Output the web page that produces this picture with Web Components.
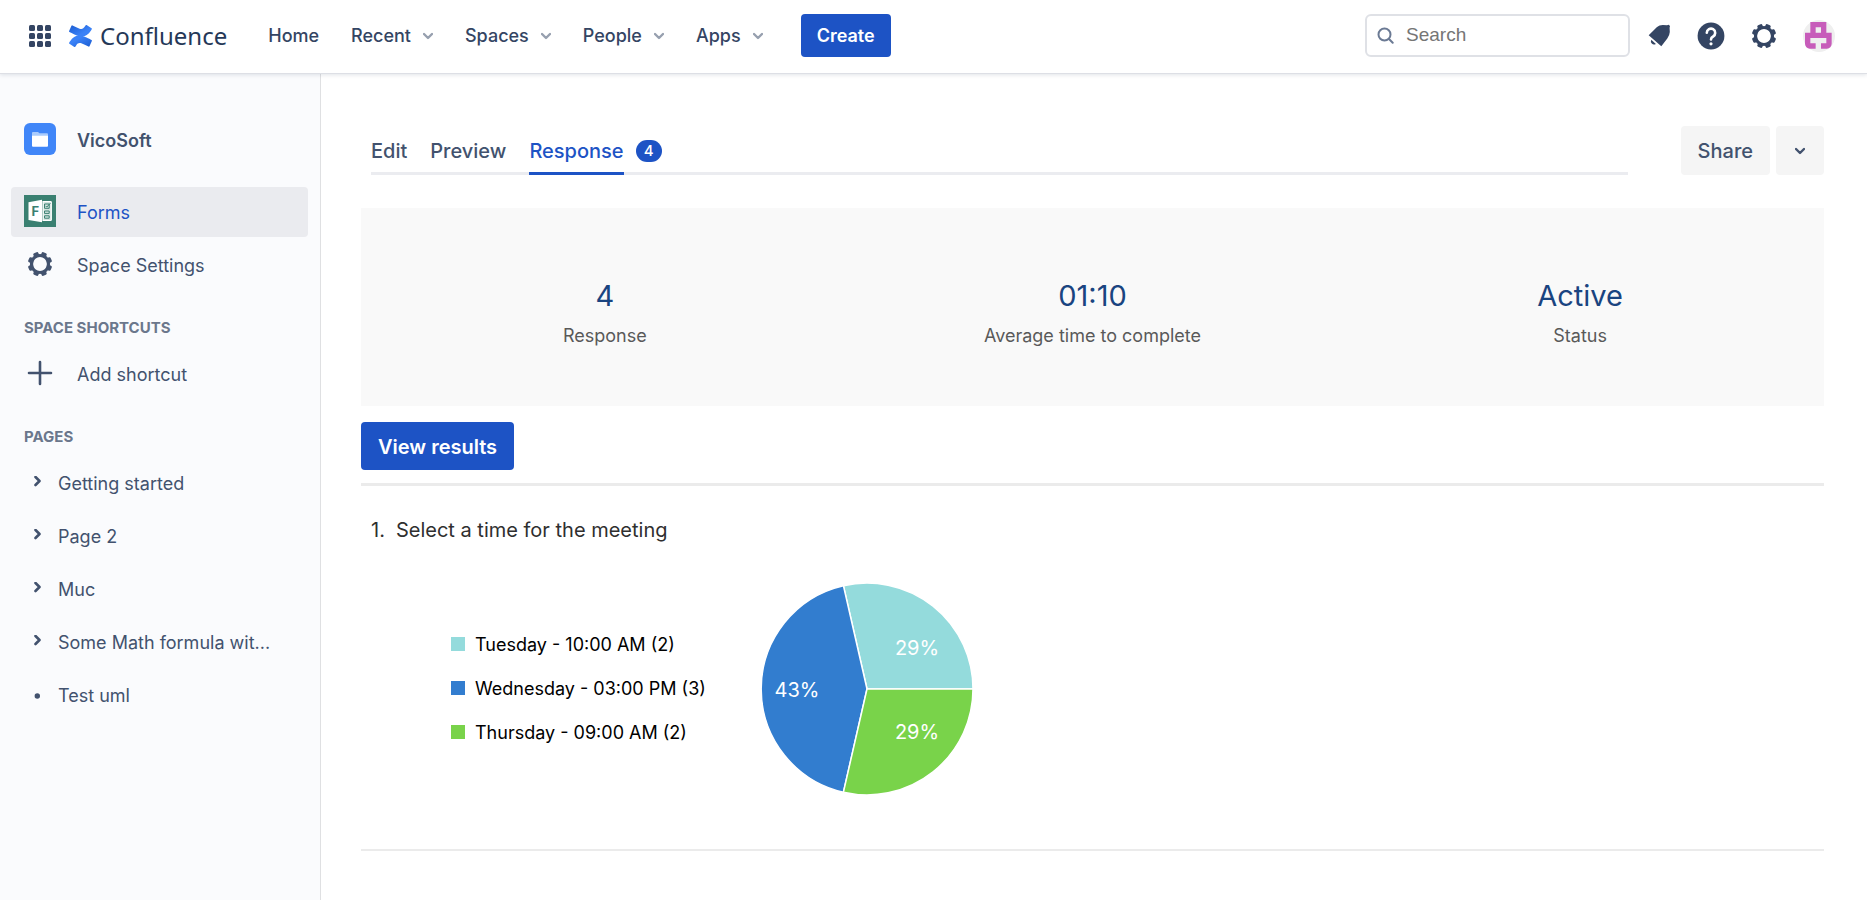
<!DOCTYPE html>
<html lang="en">
<head>
<meta charset="utf-8">
<title>Forms - VicoSoft - Confluence</title>
<style>
    body {
        margin: 0;
        min-height: 100vh;
        display: flex;
        flex-direction: column;
        font: 18px/24px Inter, "Liberation Sans", sans-serif;
        color: #42526e;
        background: #fff;
        --blue: #1d53c5;
        --navy: #344563;
    }
    .page {
        flex: 1;
        display: flex;
    }
    main {
        flex: 1;
        min-width: 0;
        padding: 52px 43px 0 40px;
    }
</style>
</head>
<body>

<top-bar>
    <nav-item>Home</nav-item>
    <nav-item menu>Recent</nav-item>
    <nav-item menu>Spaces</nav-item>
    <nav-item menu>People</nav-item>
    <nav-item menu>Apps</nav-item>
</top-bar>

<div class="page">
    <side-bar>
        <side-item icon="folder" title-row>VicoSoft</side-item>
        <side-item icon="forms" active>Forms</side-item>
        <side-item icon="gear">Space Settings</side-item>
        <side-heading>SPACE SHORTCUTS</side-heading>
        <side-item icon="plus">Add shortcut</side-item>
        <side-heading>PAGES</side-heading>
        <side-item icon="arrow" tree>Getting started</side-item>
        <side-item icon="arrow" tree>Page 2</side-item>
        <side-item icon="arrow" tree>Muc</side-item>
        <side-item icon="arrow" tree>Some Math formula wit...</side-item>
        <side-item icon="bullet" tree>Test uml</side-item>
    </side-bar>

    <main>
        <form-tabs count="4"></form-tabs>
        <stats-panel>
            <stat-box value="4">Response</stat-box>
            <stat-box value="01:10">Average time to complete</stat-box>
            <stat-box value="Active">Status</stat-box>
        </stats-panel>
        <results-bar></results-bar>
        <question-result number="1.">
            Select a time for the meeting
            <pie-chart slot="chart"></pie-chart>
        </question-result>
    </main>
</div>

<script>
// 8 teeth around a ring, centred in a 28px box
const teeth = [22, 67, 112, 157, 202, 247, 292, 337]
    .map((a) => `<rect x="11.3" y="1.8" width="5.4" height="5" rx="1.4" transform="rotate(${a + 0.5} 14 14)"/>`)
    .join("");
const gearShape = `<circle cx="14" cy="14" r="8.5" fill="none" stroke="currentColor" stroke-width="3.2"/><g fill="currentColor">${teeth}</g>`;

const icons = {
    folder: `<svg width="32" height="32" viewBox="0 0 32 32">
        <rect width="32" height="32" rx="6" fill="#4086f8"/>
        <path d="M8 13V10a1 1 0 0 1 1-1h5l1.5 1.3H23a1 1 0 0 1 1 1V13z" fill="#a9cbfc"/>
        <path d="M8 12.7h16v10a1 1 0 0 1-1 1H9a1 1 0 0 1-1-1z" fill="#fff"/></svg>`,
    forms: `<svg width="32" height="32" viewBox="0 0 32 32">
        <rect width="32" height="32" fill="#3a8071"/>
        <path d="M4.5 7.2 18 4.7v22.6L4.5 25z" fill="#fff"/>
        <text x="7.6" y="21" font-family="Inter, sans-serif" font-size="13" font-weight="700" fill="#3a8071">F</text>
        <g fill="none" stroke="#fff"><path d="M19 6.5h7.5q.8 0 .8.8v17.4q0 .8-.8.8H19z" stroke-width="1.2" fill="#d5e5e1"/>
        <path d="M20.5 9h4.7v4.3h-4.7zM20.5 16h4.7v2.4h-4.7zM20.5 20.8h4.7v2.4h-4.7z" stroke="#3a8071"/>
        <path d="M21.5 10.8l1.3 1.3 3.6-4" stroke="#3a8071"/></g></svg>`,
    gear: `<svg width="32" height="28" viewBox="-2 0 32 28">${gearShape}</svg>`,
    plus: `<svg width="32" height="32" viewBox="0 0 32 32"><path d="M16 5v22M5 16h22" stroke="currentColor" stroke-width="2.6" stroke-linecap="round"/></svg>`,
    arrow: `<svg width="27" height="12" viewBox="0 0 27 12"><path d="M11.5 1l4 4-4 4" fill="none" stroke="currentColor" stroke-width="2.6" stroke-linecap="round" stroke-linejoin="round"/></svg>`,
    bullet: `<svg width="27" height="12" viewBox="0 0 27 12"><circle cx="13.3" cy="8" r="2.7" fill="currentColor"/></svg>`,
    chevron: `<svg width="10" height="10" viewBox="0 0 10 10"><path d="M1 3l4 4 4-4" fill="none" stroke="currentColor" stroke-width="2.4" stroke-linecap="round" stroke-linejoin="round"/></svg>`
};

class BaseElement extends HTMLElement {
    render(html) {
        const template = document.createElement("template");
        template.innerHTML = html;
        this.attachShadow({ mode: "open" });
        this.shadowRoot.appendChild(template.content.cloneNode(true));
    }
}

class TopBar extends BaseElement {
    connectedCallback() {
        this.render(`
    <style>
        :host {
            display: flex;
            align-items: center;
            box-sizing: border-box;
            height: 74px;
            padding: 0 32px 2px 29px;
            border-bottom: 1px solid #dddfe5;
            box-shadow: 0 1px 4px rgba(9, 30, 66, 0.12);
            position: relative;
            background: #fff;
            color: var(--navy);
        }
        svg { display: block; }
        button {
            border: 0;
            padding: 0;
            background: none;
            color: inherit;
            font: inherit;
            cursor: pointer;
        }
        .brand {
            display: flex;
            align-items: center;
            gap: 8px;
            margin: 0 41px 0 18px;
            color: #253858;
            font: 24px/32px "Noto Sans", sans-serif;
            text-decoration: none;
        }
        nav { display: flex; gap: 32px; }
        .create {
            height: 43px;
            margin-left: 38px;
            padding: 0 16px;
            border-radius: 4px;
            background: var(--blue);
            color: #fff;
            font-weight: 600;
        }
        .search {
            display: flex;
            align-items: center;
            gap: 12px;
            box-sizing: border-box;
            width: 265px;
            height: 43px;
            margin: 0 14px 0 auto;
            padding: 0 11px 0 10px;
            border: 2px solid #dfe1e6;
            border-radius: 6px;
            color: #6b7a94;
        }
        input {
            flex: 1;
            min-width: 0;
            border: 0;
            padding: 0 0 2px;
            outline: 0;
            background: none;
            font: 19px/24px "Liberation Sans", sans-serif;
        }
        input::placeholder { color: #757575; }
        .tools { display: flex; align-items: center; gap: 25px; }
    </style>

    <button aria-label="Switch to">
        <svg width="22" height="22" viewBox="0 0 22 22" fill="currentColor">
            <rect width="6" height="6" rx="1.5"/><rect x="8" width="6" height="6" rx="1.5"/><rect x="16" width="6" height="6" rx="1.5"/>
            <rect y="8" width="6" height="6" rx="1.5"/><rect x="8" y="8" width="6" height="6" rx="1.5"/><rect x="16" y="8" width="6" height="6" rx="1.5"/>
            <rect y="16" width="6" height="6" rx="1.5"/><rect x="8" y="16" width="6" height="6" rx="1.5"/><rect x="16" y="16" width="6" height="6" rx="1.5"/>
        </svg>
    </button>
    <a class="brand" href="#">
        <svg width="23" height="22" viewBox="2.4 7.6 22 21.1">
            <defs>
                <linearGradient id="wave" x1="1" y1="1" x2="0.3" y2="0.4">
                    <stop offset="0" stop-color="#1a5bd0"/><stop offset="1" stop-color="#3b82f7"/>
                </linearGradient>
                <path id="half" fill="url(#wave)" d="M3.26 23.52c-.23.38-.5.82-.72 1.18a.72.72 0 0 0 .24.98l4.73 2.91a.73.73 0 0 0 1.01-.25c.19-.32.43-.73.7-1.17 1.87-3.09 3.76-2.71 7.15-1.09l4.69 2.23a.73.73 0 0 0 .98-.36l2.25-5.09a.72.72 0 0 0-.36-.95c-.99-.47-2.96-1.4-4.73-2.25-6.38-3.1-11.8-2.9-15.93 3.86z"/>
            </defs>
            <use href="#half"/>
            <use href="#half" transform="rotate(180 13.38 18.15)"/>
        </svg>
        <span>Confluence</span>
    </a>
    <nav><slot></slot></nav>
    <button class="create">Create</button>

    <label class="search">
        <svg width="17" height="17" viewBox="0 0 17 17" fill="none" stroke="currentColor" stroke-width="2" stroke-linecap="round">
            <circle cx="7.5" cy="7.5" r="6"/><path d="M12 12l3.7 3.7"/>
        </svg>
        <input type="search" placeholder="Search" aria-label="Search">
    </label>
    <div class="tools">
        <button aria-label="Notifications">
            <svg width="28" height="28" viewBox="0 0 28 28" fill="currentColor">
                <path d="M4.7 13.3 13 5q2.4-2.2 6-2.1l4 .3 1.7-.5L26 4l-.4 1.8.2 4.2q-.2 3.4-2.5 6.5L17.3 24.3z"/>
                <path d="M7.3 17.7l4.6 4.3q-2.4 1.2-4.1-.4t-.5-3.9z"/>
            </svg>
        </button>
        <button aria-label="Help">
            <svg width="28" height="28" viewBox="0 0 28 28">
                <circle cx="14" cy="14" r="13.4" fill="currentColor"/>
                <path d="M9.8 10.8a4.2 4.2 0 1 1 6.3 3.7q-2.1 1.1-2.1 3" fill="none" stroke="#fff" stroke-width="2.6" stroke-linecap="round"/>
                <circle cx="14" cy="21.8" r="1.6" fill="#fff"/>
            </svg>
        </button>
        <button aria-label="Settings"><svg width="28" height="28" viewBox="0 0 28 28">${gearShape}</svg></button>
        <button aria-label="Profile">
            <svg width="32" height="32" viewBox="0 0 12 12">
                <circle cx="6" cy="6" r="6" fill="#efefef"/>
                <path fill="#c75cba" fill-rule="evenodd" d="M2.75.75h6v4h2v4.2a1.8 1.8 0 0 1-1.8 1.8H6.75v-2h2v-2h-6v2h2v2H2.55A1.8 1.8 0 0 1 .75 8.95V4.75h2zM4.75 2.75v2h2v-2z"/>
            </svg>
        </button>
    </div>`);
    }
}

class NavItem extends BaseElement {
    connectedCallback() {
        this.render(`
    <style>
        :host { display: block; }
        a {
            display: flex;
            align-items: center;
            gap: 12px;
            color: inherit;
            font-weight: 500;
            text-decoration: none;
        }
        svg { color: #97a0af; }
    </style>
    <a href="#"><slot></slot>${this.hasAttribute("menu") ? icons.chevron : ""}</a>`);
    }
}

class SideBar extends BaseElement {
    connectedCallback() {
        this.render(`
    <style>
        :host {
            display: block;
            box-sizing: border-box;
            width: 321px;
            padding: 41px 12px 0 11px;
            border-right: 1px solid #dfe0e2;
            background: #fafbfd;
        }
        nav {
            display: flex;
            flex-direction: column;
            gap: 3px;
        }
    </style>
    <nav aria-label="Space"><slot></slot></nav>`);
    }
}

class SideHeading extends BaseElement {
    connectedCallback() {
        this.render(`
    <style>
        :host {
            display: block;
            padding: 25px 13px 8px;
        }
        h2 {
            margin: 0;
            color: #6b778c;
            font-size: 15px;
            line-height: 20px;
            font-weight: 700;
        }
    </style>
    <h2><slot></slot></h2>`);
    }
}

class SideItem extends BaseElement {
    connectedCallback() {
        this.render(`
    <style>
        :host { display: block; }
        :host([title-row]) {
            margin-bottom: 19px;
            font-weight: 600;
        }
        a {
            display: flex;
            align-items: center;
            gap: 21px;
            height: 50px;
            padding: 0 13px;
            border-radius: 4px;
            color: inherit;
            text-decoration: none;
            white-space: nowrap;
        }
        :host([tree]) a { gap: 7px; }
        :host([active]) a {
            background: #eaebef;
            color: var(--blue);
        }
        svg {
            flex: none;
            margin-bottom: 2px;
        }
        span { padding-top: 2px; }
    </style>
    <a href="#">${icons[this.getAttribute("icon")]}<span><slot></slot></span></a>`);
    }
}

class FormTabs extends BaseElement {
    connectedCallback() {
        this.render(`
    <style>
        :host {
            display: flex;
            height: 49px;
            margin-bottom: 33px;
            font-size: 20px;
            font-weight: 500;
        }
        nav {
            flex: 1;
            display: flex;
            gap: 23px;
            margin: 0 53px 0 10px;
            box-shadow: inset 0 -3px #ebecf0;
        }
        a {
            display: flex;
            align-items: center;
            color: inherit;
            text-decoration: none;
        }
        .current {
            color: var(--blue);
            box-shadow: inset 0 -3px var(--blue);
        }
        .badge {
            align-self: center;
            min-width: 26px;
            margin-left: -11px;
            border-radius: 11px;
            background: var(--blue);
            color: #fff;
            font-size: 15px;
            line-height: 22px;
            text-align: center;
        }
        .actions { display: flex; gap: 6px; }
        button {
            border: 0;
            border-radius: 4px;
            padding: 0 17px;
            background: #f5f5f5;
            color: inherit;
            font: inherit;
        }
        button svg { display: block; margin: 0 2px; }
    </style>
    <nav>
        <a href="#">Edit</a>
        <a href="#">Preview</a>
        <a class="current" href="#" aria-current="page">Response</a>
        <span class="badge">${this.getAttribute("count")}</span>
    </nav>
    <div class="actions">
        <button>Share</button>
        <button aria-label="More">${icons.chevron}</button>
    </div>`);
    }
}

class StatsPanel extends BaseElement {
    connectedCallback() {
        this.render(`
    <style>
        :host {
            display: grid;
            grid-template-columns: repeat(3, 1fr);
            padding: 70px 0 56px;
            background: #f9f9f9;
        }
    </style>
    <slot></slot>`);
    }
}

class StatBox extends BaseElement {
    connectedCallback() {
        this.render(`
    <style>
        :host {
            display: flex;
            flex-direction: column;
            gap: 8px;
            align-items: center;
        }
        .value {
            color: #1a4480;
            font-size: 29px;
            line-height: 36px;
        }
        .label {
            color: #595959;
            line-height: 28px;
        }
    </style>
    <div class="value">${this.getAttribute("value")}</div>
    <div class="label"><slot></slot></div>`);
    }
}

class ResultsBar extends BaseElement {
    connectedCallback() {
        this.render(`
    <style>
        :host {
            display: block;
            padding: 16px 0 13px;
            border-bottom: 3px solid #ebebeb;
        }
        button {
            display: block;
            height: 48px;
            padding: 2px 17px 0;
            border: 0;
            border-radius: 4px;
            background: var(--blue);
            color: #fff;
            font: inherit;
            font-size: 20px;
            font-weight: 600;
        }
    </style>
    <button>View results</button>`);
    }
}

class QuestionResult extends BaseElement {
    connectedCallback() {
        this.render(`
    <style>
        :host {
            display: block;
            padding: 30px 0 54px;
            border-bottom: 2px solid #ebebeb;
        }
        h3 {
            display: flex;
            gap: 11px;
            margin: 0 0 39px 10px;
            color: #2f2f2f;
            font-size: 20px;
            line-height: 28px;
            font-weight: 400;
        }
    </style>
    <h3><span>${this.getAttribute("number")}</span><span><slot></slot></span></h3>
    <slot name="chart"></slot>`);
    }
}

class PieChart extends BaseElement {
    connectedCallback() {
        const data = [
            { label: "Tuesday - 10:00 AM", votes: 2, color: "#94dbdc" },
            { label: "Wednesday - 03:00 PM", votes: 3, color: "#327dcf" },
            { label: "Thursday - 09:00 AM", votes: 2, color: "#79d34a" }
        ];
        const total = data.reduce((sum, d) => sum + d.votes, 0);
        const r = 106;
        let angle = 0;
        let slices = "";
        const point = (a, len) => (Math.cos(a) * len).toFixed(1) + " " + (-Math.sin(a) * len).toFixed(1);

        // slices go counter clockwise, starting at 3 o'clock
        for (const d of data) {
            const end = angle + (d.votes / total) * Math.PI * 2;
            const mid = (angle + end) / 2;
            const x = Math.cos(mid) * 70;
            const y = -Math.sin(mid) * 54;
            slices += `<path d="M0 0L${point(angle, r)}A${r} ${r} 0 0 0 ${point(end, r)}z" fill="${d.color}" stroke="#fff" stroke-width="1.5"/>
            <text x="${(x + (x > 0 ? 6 : 0)).toFixed(0)}" y="${(y + 8).toFixed(0)}">${Math.round((d.votes / total) * 100)}%</text>`;
            angle = end;
        }

        this.render(`
    <style>
        :host {
            display: flex;
            align-items: center;
            gap: 55px;
            padding-left: 90px;
            color: #000;
        }
        ul {
            display: grid;
            gap: 20px;
            margin: 0;
            padding: 0;
            list-style: none;
        }
        li {
            display: flex;
            align-items: center;
            gap: 10px;
        }
        i {
            width: 14px;
            height: 14px;
            margin-bottom: 2px;
        }
        svg { display: block; }
        text {
            fill: #fff;
            font-size: 20px;
            text-anchor: middle;
        }
    </style>
    <ul>${data.map((d) => `<li><i style="background:${d.color}"></i>${d.label} (${d.votes})</li>`).join("")}</ul>
    <svg width="212" height="212" viewBox="-106 -106 212 212">${slices}</svg>`);
    }
}

customElements.define("top-bar", TopBar);
customElements.define("nav-item", NavItem);
customElements.define("side-bar", SideBar);
customElements.define("side-heading", SideHeading);
customElements.define("side-item", SideItem);
customElements.define("form-tabs", FormTabs);
customElements.define("stats-panel", StatsPanel);
customElements.define("stat-box", StatBox);
customElements.define("results-bar", ResultsBar);
customElements.define("question-result", QuestionResult);
customElements.define("pie-chart", PieChart);
</script>
</body>
</html>
